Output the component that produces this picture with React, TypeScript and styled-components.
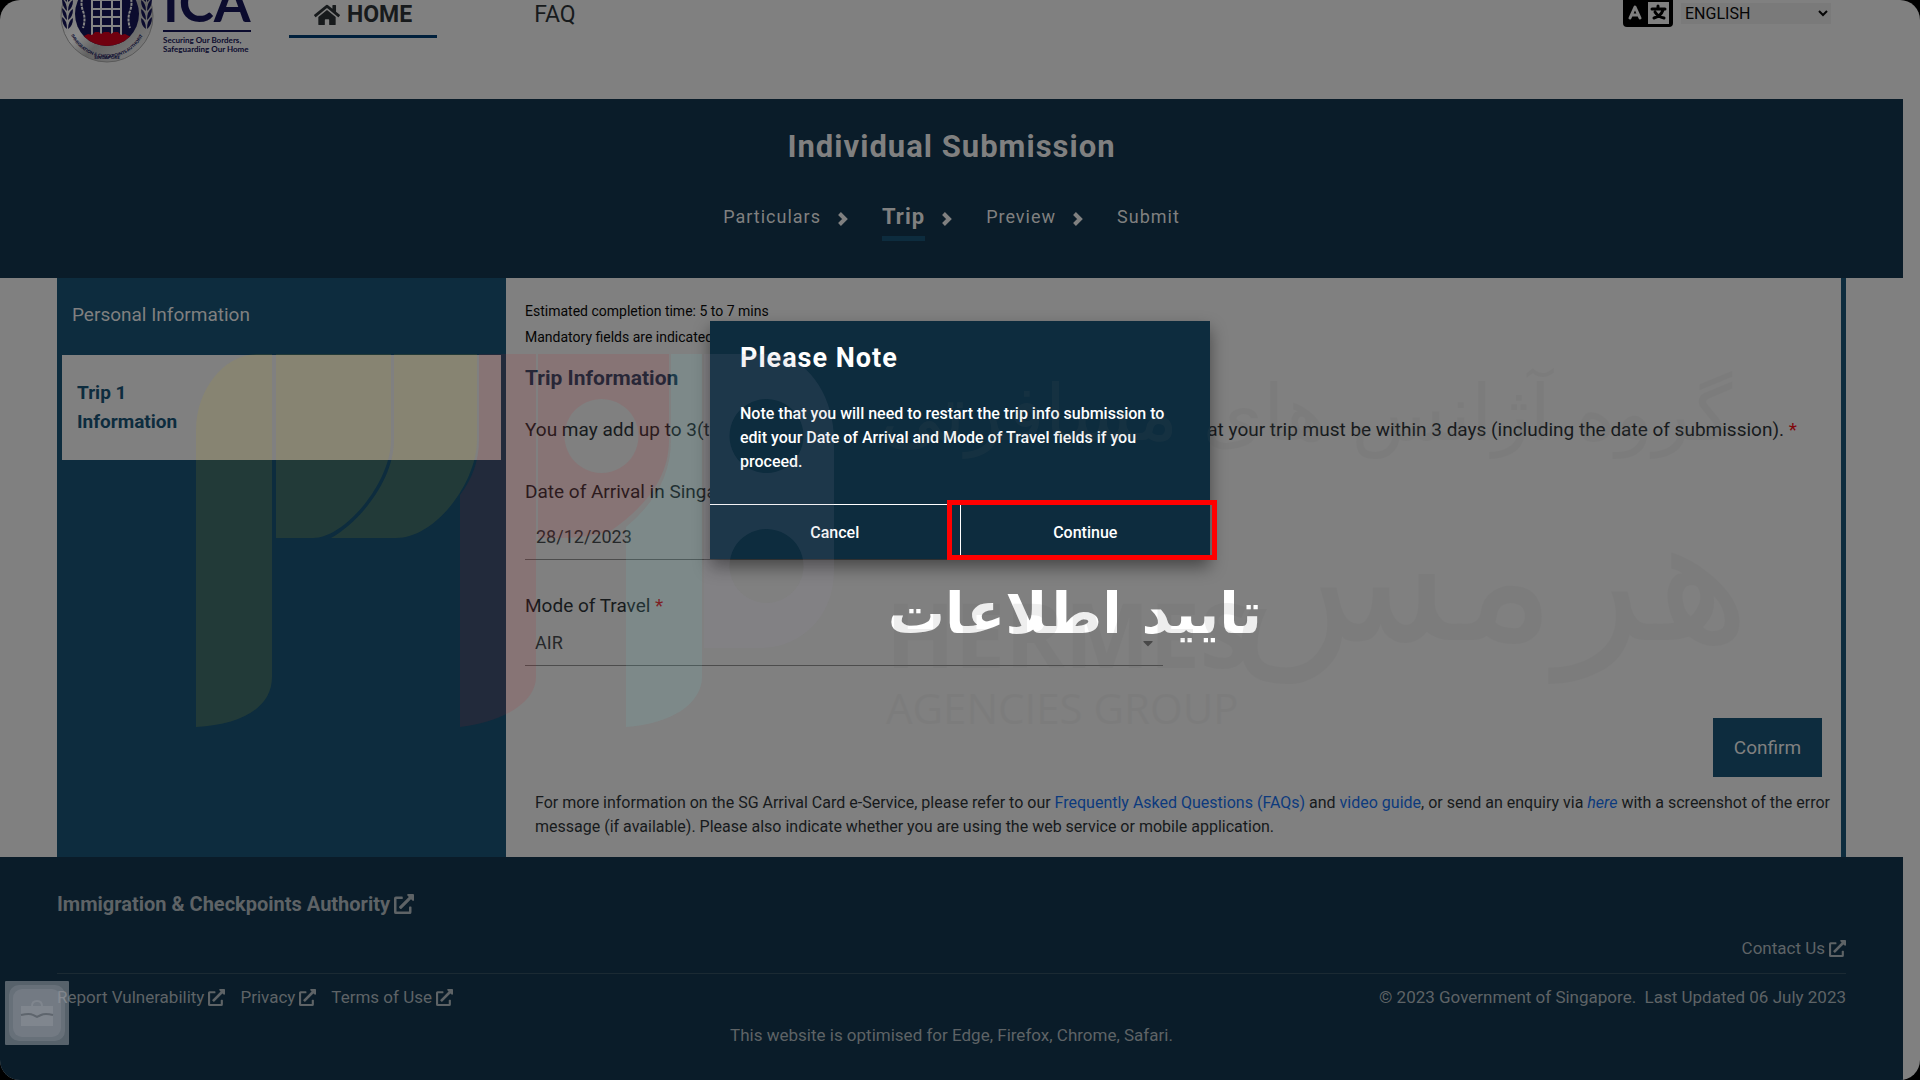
import React from 'react';
import styled, { createGlobalStyle } from 'styled-components';
import { FaHome, FaExternalLinkAlt, FaCaretDown } from 'react-icons/fa';

const c = {
  surface: '#808080',
  navy: '#0a1c29',
  teal: '#0d2c3e',
  ink: '#171a1c',
  muted: '#5e6366',
  link: '#0c3a7d',
};

const GlobalStyle = createGlobalStyle`
  * { box-sizing: border-box; }
  html, body { margin: 0; background: #000; }
  body { font-family: Roboto, "Liberation Sans", sans-serif; font-size: 16px; color: ${c.ink}; }
  h1, h2, h3, p { margin: 0; }
  button, select, input { font: inherit; color: inherit; }
  a { color: inherit; text-decoration: none; }
`;

const Screen = styled.div`
  position: relative;
  min-height: 100vh;
  padding-right: 17px;
  background: ${c.surface};
  border-radius: 20px;
  overflow: hidden;
  display: flex;
  flex-direction: column;
`;

const Header = styled.header`
  height: 99px;
  padding: 0 72px 0 60px;
  display: flex;
  align-items: flex-start;
  overflow: hidden;
`;

const Brand = styled.a`
  display: flex;
  gap: 9px;
  color: #0b0b2e;
  margin-top: -31px;
`;

const BrandText = styled.div`
  font-family: Lato, sans-serif;
  font-weight: 700;
  padding-top: 5px;
  width: 88px;
`;

const BrandName = styled.div`
  font-size: 53px;
  line-height: 56px;
  font-weight: 700;
  border-bottom: 2px solid #0b0b2e;
  white-space: nowrap;
`;

const BrandLine = styled.div`
  font-size: 8px;
  line-height: 9px;
  padding-top: 4px;
  white-space: nowrap;
`;

const Nav = styled.nav`
  display: flex;
  gap: 72px;
  margin-left: 38px;
`;

const NavLink = styled.a<{ $active?: boolean }>`
  display: flex;
  align-items: center;
  gap: 7px;
  height: 38px;
  padding: 0 25px 6px;
  font-size: 23px;
  font-weight: ${(p) => (p.$active ? 700 : 400)};
  border-bottom: 3px solid ${(p) => (p.$active ? '#00203c' : 'transparent')};
`;

const Language = styled.label`
  display: flex;
  gap: 8px;
  margin-left: auto;
`;

const LanguageSelect = styled.select`
  width: 150px;
  height: 21px;
  margin-top: 3px;
  padding: 0;
  border: 0;
  background: #7a7a7a;
  color: #050505;
`;

const Banner = styled.section`
  height: 179px;
  padding-top: 28px;
  background: ${c.navy};
  color: ${c.surface};
  display: flex;
  flex-direction: column;
  align-items: center;
  letter-spacing: 1px;
`;

const BannerTitle = styled.h1`
  font-size: 31px;
  line-height: 40px;
  font-weight: 700;
`;

const Steps = styled.ol`
  display: flex;
  list-style: none;
  margin: 28px 0 0;
  padding: 0;
  height: 48px;
`;

const Step = styled.li<{ $current?: boolean }>`
  display: flex;
  gap: 16px;
  margin-right: 34px;
  &:last-child { margin-right: 0; }
  span {
    height: 46px;
    line-height: 44px;
    font-size: ${(p) => (p.$current ? 22 : 18)}px;
    font-weight: ${(p) => (p.$current ? 700 : 400)};
    border-bottom: 5px solid ${(p) => (p.$current ? c.teal : 'transparent')};
  }
  svg { margin-top: 16px; }
`;

const Columns = styled.main`
  display: flex;
  margin: 0 57px;
  min-height: 579px;
  border-right: 5px solid ${c.teal};
`;

const Sidebar = styled.aside`
  width: 449px;
  flex: none;
  padding: 22px 5px;
  background: ${c.teal};
  color: ${c.surface};
  font-size: 19px;
`;

const SideHeading = styled.h2`
  padding: 0 10px;
  font-size: 19px;
  line-height: 30px;
  font-weight: 400;
`;

const SideCard = styled.a`
  display: block;
  margin-top: 25px;
  padding: 23px 15px;
  height: 105px;
  background: ${c.surface};
  color: ${c.teal};
  line-height: 29px;
  font-weight: 700;
`;

const Content = styled.section`
  flex: 1;
  min-width: 0;
  padding: 20px 5px 17px 19px;
  display: flex;
  flex-direction: column;
`;

const Small = styled.p`
  font-size: 14px;
  line-height: 26px;
  color: #050505;
`;

const SectionTitle = styled.h2`
  margin-top: 12px;
  font-size: 21px;
  line-height: 32px;
  font-weight: 700;
  color: #13283a;
`;

const Lead = styled.p`
  margin-top: 22px;
  font-size: 19px;
  line-height: 28px;
  white-space: nowrap;
`;

const Star = styled.span`
  color: #80080c;
`;

const Field = styled.div<{ $gap: number }>`
  width: 638px;
  margin-top: ${(p) => p.$gap}px;
  display: flex;
  flex-direction: column;
  border-bottom: 1px solid #4c4c4c;
  label { font-size: 19px; line-height: 28px; }
`;

const DateInput = styled.input`
  height: 43px;
  margin-top: 10px;
  padding: 0 11px 3px;
  border: 0;
  background: transparent;
  font-size: 18px;
  color: #26282a;
`;

const SelectWrap = styled.div`
  display: flex;
  align-items: center;
  padding-right: 7px;
  height: 45px;
`;

const ModeSelect = styled.select`
  flex: 1;
  height: 36px;
  padding: 0 10px;
  border: 0;
  appearance: none;
  background: transparent;
  font-size: 18px;
  color: #26282a;
`;

const Confirm = styled.button`
  align-self: flex-end;
  width: 109px;
  height: 59px;
  margin: 52px 14px 0 0;
  border: 0;
  background: ${c.teal};
  color: ${c.surface};
  font-size: 19px;
`;

const Info = styled.p`
  margin-top: 14px;
  padding: 0 0 0 10px;
  line-height: 24px;
  a { color: ${c.link}; }
`;

const Footer = styled.footer`
  flex: 1;
  padding: 33px 57px 0;
  background: ${c.navy};
  color: ${c.muted};
  font-size: 17px;
`;

const FootLink = styled.a<{ $strong?: boolean }>`
  display: inline-flex;
  align-items: center;
  gap: 4px;
  line-height: 28px;
  font-size: ${(p) => (p.$strong ? 20 : 17)}px;
  font-weight: ${(p) => (p.$strong ? 700 : 400)};
`;

const FootContact = styled.div`
  display: flex;
  justify-content: flex-end;
  padding: 16px 0 11px;
  border-bottom: 1px solid #1b2a33;
`;

const FootRow = styled.div`
  display: flex;
  justify-content: space-between;
  align-items: center;
  padding-top: 9px;
  > span { white-space: pre; }
`;

const FootLinks = styled.div`
  display: flex;
  gap: 15px;
`;

const FootNote = styled.p`
  margin-top: 13px;
  line-height: 22px;
  font-size: 17px;
  text-align: center;
`;

const Dialog = styled.div`
  position: absolute;
  top: 321px;
  left: 50%;
  width: 500px;
  margin-left: -250px;
  background: ${c.teal};
  color: #fff;
  box-shadow: 0 8px 16px rgba(0, 0, 0, 0.45);
`;

const DialogBody = styled.div`
  padding: 19px 30px 30px;
  border-bottom: 1px solid #fff;
  h2 { font-size: 27px; line-height: 36px; font-weight: 700; letter-spacing: 1px; }
  p { margin-top: 26px; line-height: 24px; font-weight: 500; }
`;

const DialogActions = styled.div`
  display: flex;
`;

const DialogButton = styled.button`
  flex: 1;
  height: 54px;
  border: 0;
  background: transparent;
  font-weight: 500;
  & + & { border-left: 1px solid #fff; }
`;

const Highlight = styled.div`
  position: absolute;
  right: -7px;
  bottom: -1px;
  width: 270px;
  height: 60px;
  border: 5px solid #ff0000;
  pointer-events: none;
`;

const Caption = styled.p`
  position: absolute;
  top: 568px;
  left: 50%;
  margin-left: -70px;
  width: 372px;
  text-align: center;
  white-space: nowrap;
  color: #fff;
  font: 700 57px/90px "DejaVu Sans", sans-serif;
`;

const Watermark = styled.svg`
  position: absolute;
  top: 340px;
  left: 50%;
  margin-left: -780px;
  pointer-events: none;
`;

const Toolbox = styled.button`
  position: absolute;
  left: 5px;
  bottom: 35px;
  width: 64px;
  height: 64px;
  padding: 0;
  border: 0;
  background: transparent;
  svg { display: block; }
`;

const Chevron = () => (
  <svg width="11" height="16" viewBox="0 0 11 16" aria-hidden="true">
    <path d="M2.500 2.500L8 8L2.500 13.500" fill="none" stroke="currentColor" strokeWidth="4" />
  </svg>
);

const laurels = [0, 1, 2, 3];

const Seal = () => (
  <svg width="94" height="94" viewBox="0 0 94 94" aria-hidden="true">
    <defs>
      <linearGradient id="silver" x1="0" y1="0" x2="1" y2="1">
        <stop offset="0" stopColor="#6b6b6b" />
        <stop offset=".45" stopColor="#8a8a8a" />
        <stop offset=".6" stopColor="#626262" />
        <stop offset="1" stopColor="#858585" />
      </linearGradient>
      <clipPath id="shield"><circle cx="47" cy="45" r="32" /></clipPath>
      <path id="ringText" d="M11 66 A40 40 0 0 0 83 66" />
    </defs>
    <circle cx="47" cy="47" r="46" fill="url(#silver)" stroke="#595959" />
    <g clipPath="url(#shield)">
      <rect width="94" height="94" fill="#0b0b2e" />
      <g stroke="#858585" strokeWidth="2" fill="none">
        <path d="M32 20V66M41 20V66M52 20V66M61 20V66M32 31H61M32 40H61M32 48H61M32 57H61" />
      </g>
      <g stroke="#858585" strokeWidth="2" strokeDasharray="3 1" fill="none">
        <path d="M23 26q-3 8 0 16t0 17M70 26q3 8 0 16t0 17" />
      </g>
      <path d="M10 94V68l9-2 5 1 4-2 4 1 3-3h4l2 2 3-2h5l2 2 3-2h4l3 3 4-1 4 2 15 0v27z" fill="#70000f" />
    </g>
    {laurels.map((i) => (
      <g key={i} fill="#0b0b2e" transform={`translate(0 ${-i * 9})`}>
        <path d="M2 48q5 3 5 12q-5-4-5-12zM13 49q-5 3-5 11q5-3 5-11z" />
        <path d="M92 48q-5 3-5 12q5-4 5-12zM81 49q5 3 5 11q-5-3-5-11z" />
      </g>
    ))}
    <text fontSize="4.300" fontFamily="Lato, sans-serif" fontWeight="900" fill="#0b0b2e">
      <textPath href="#ringText">IMMIGRATION &amp; CHECKPOINTS AUTHORITY</textPath>
    </text>
    <text x="47" y="90" textAnchor="middle" fontSize="4.500" fontFamily="Lato, sans-serif" fontWeight="900" fill="#0b0b2e">SINGAPORE</text>
  </svg>
);

const LanguageIcon = () => (
  <svg width="50" height="27" viewBox="0 0 50 27" aria-hidden="true">
    <path d="M0 0H50V23a4 4 0 0 1-4 4H4a4 4 0 0 1-4-4z" fill="#000" />
    <rect x="25" y="2" width="21" height="22" fill="#808080" />
    <path d="M7 18l5-11 5 11M9 15h6" fill="none" stroke="#808080" strokeWidth="3" strokeLinecap="round" strokeLinejoin="round" />
    <path d="M29 9h13M35 6v3M40 10q-2 6-9 8M32 12q3 5 9 6" fill="none" stroke="#000" strokeWidth="3" strokeLinecap="round" />
  </svg>
);

const steps = ['Particulars', 'Trip', 'Preview', 'Submit'];

export default function App() {
  return (
    <>
      <GlobalStyle />
      <Screen>
        <Header>
          <Brand href="#" aria-label="ICA home">
            <Seal />
            <BrandText>
              <BrandName>ICA</BrandName>
              <BrandLine>Securing Our Borders,<br />Safeguarding Our Home</BrandLine>
            </BrandText>
          </Brand>
          <Nav>
            <NavLink href="#" $active><FaHome size={26} />HOME</NavLink>
            <NavLink href="#">FAQ</NavLink>
          </Nav>
          <Language>
            <LanguageIcon />
            <LanguageSelect aria-label="Language"><option>ENGLISH</option></LanguageSelect>
          </Language>
        </Header>

        <Banner>
          <BannerTitle>Individual Submission</BannerTitle>
          <Steps>
            {steps.map((s, i) => (
              <Step key={s} $current={s === 'Trip'}>
                <span>{s}</span>
                {i < steps.length - 1 && <Chevron />}
              </Step>
            ))}
          </Steps>
        </Banner>

        <Columns>
          <Sidebar>
            <SideHeading>Personal Information</SideHeading>
            <SideCard href="#">Trip 1<br />Information</SideCard>
          </Sidebar>
          <Content>
            <Small>Estimated completion time: 5 to 7 mins</Small>
            <Small>Mandatory fields are indicated with *</Small>
            <SectionTitle>Trip Information</SectionTitle>
            <Lead>
              You may add up to 3(three) trips within the same submission. Please also note that your trip must be within 3 days (including the date of submission). <Star>*</Star>
            </Lead>
            <Field $gap={34}>
              <label htmlFor="arrival">Date of Arrival in Singapore <Star>*</Star></label>
              <DateInput id="arrival" defaultValue="28/12/2023" />
            </Field>
            <Field $gap={32}>
              <label htmlFor="mode">Mode of Travel <Star>*</Star></label>
              <SelectWrap>
                <ModeSelect id="mode"><option>AIR</option></ModeSelect>
                <FaCaretDown size={16} color="#484848" />
              </SelectWrap>
            </Field>
            <Confirm type="button">Confirm</Confirm>
            <Info>
              For more information on the SG Arrival Card e-Service, please refer to our <a href="#">Frequently Asked Questions (FAQs)</a> and <a href="#">video guide</a>, or send an enquiry via <a href="#"><i>here</i></a> with a screenshot of the error message (if available). Please also indicate whether you are using the web service or mobile application.
            </Info>
          </Content>
        </Columns>

        <Footer>
          <FootLink href="#" $strong>Immigration &amp; Checkpoints Authority <FaExternalLinkAlt size={20} /></FootLink>
          <FootContact><FootLink href="#">Contact Us <FaExternalLinkAlt size={17} /></FootLink></FootContact>
          <FootRow>
            <FootLinks>
              <FootLink href="#">Report Vulnerability <FaExternalLinkAlt size={17} /></FootLink>
              <FootLink href="#">Privacy <FaExternalLinkAlt size={17} /></FootLink>
              <FootLink href="#">Terms of Use <FaExternalLinkAlt size={17} /></FootLink>
            </FootLinks>
            <span>{'© 2023 Government of Singapore.  Last Updated 06 July 2023'}</span>
          </FootRow>
          <FootNote>This website is optimised for Edge, Firefox, Chrome, Safari.</FootNote>
        </Footer>

        <Dialog role="dialog" aria-labelledby="note-title">
          <DialogBody>
            <h2 id="note-title">Please Note</h2>
            <p>Note that you will need to restart the trip info submission to edit your Date of Arrival and Mode of Travel fields if you proceed.</p>
          </DialogBody>
          <DialogActions>
            <DialogButton type="button">Cancel</DialogButton>
            <DialogButton type="button">Continue</DialogButton>
          </DialogActions>
          <Highlight />
        </Dialog>

        <Caption lang="fa" dir="rtl">تایید اطلاعات</Caption>

        <Watermark width="1560" height="400" viewBox="180 340 1560 400" aria-hidden="true">
          <g fill="rgb(187,161,20)" fillOpacity=".12">
            <path d="M196 430C196 390 224 354 258 354H272V677C272 707 242 725 196 727Z" />
            <path d="M276 354H391V440C391 482 345 538 313 538H276Z" />
            <path d="M394 354H477V440C477 482 436 538 396 538H331C360 522 394 480 394 440Z" />
          </g>
          <g fill="rgb(190,30,40)" fillOpacity=".12">
            <path d="M479 354H536V677C536 703 502 722 460 727V495Q479 470 479 440Z" />
            <path fillRule="evenodd" d="M538 354H669V440C669 482 640 510 612 530Q590 538 560 538H538ZM601 399a37 37 0 1 0 1 0Z" />
          </g>
          <path d="M671 354H702V677C702 703 672 724 626 727V527Q671 490 671 440Z" fill="rgb(110,205,205)" fillOpacity=".12" />
          <g fill="rgb(146,137,163)" fillOpacity=".12" fillRule="evenodd">
            <path d="M704 354H778C812 362 834 400 834 440V529H704ZM766 399a37 37 0 1 0 1 0Z" />
            <path d="M704 529H834V570C834 618 800 648 760 648H704ZM766 529a37 37 0 1 0 1 0Z" />
          </g>
          <g fill="#606060" opacity=".1">
            <text x="1306" y="440" textAnchor="middle" direction="rtl" fontSize="77" fontFamily="DejaVu Sans, sans-serif">گروه آژانس های مسافرتی</text>
            <text x="1490" y="640" textAnchor="middle" direction="rtl" fontSize="180" fontFamily="DejaVu Sans, sans-serif">هرمس</text>
            <text x="886" y="668" fontSize="90" fontWeight="700" fontFamily="Open Sans, sans-serif">HERMES</text>
            <text x="886" y="724" fontSize="42" fontFamily="Open Sans, sans-serif">AGENCIES GROUP</text>
          </g>
        </Watermark>

        <Toolbox type="button" aria-label="Toolbox">
          <svg width="64" height="64" viewBox="0 0 64 64">
            <rect width="64" height="64" rx="1" fill="#a4a8ae" fillOpacity=".5" />
            <rect x="4" y="4" width="56" height="56" rx="10" fill="#8e939d" fillOpacity=".3" />
            <rect x="8" y="8" width="48" height="48" rx="9" fill="#8e939d" fillOpacity=".3" />
            <path d="M16 25H48V45H16z" fill="#80868e" />
            <path d="M27 25q0-5 5-5t5 5" fill="none" stroke="#80868e" strokeWidth="2" />
            <path d="M16 34q9-2 12 0l4 2 4-2q4-2 12 0" fill="none" stroke="#5e656d" strokeWidth="2" />
          </svg>
        </Toolbox>
      </Screen>
    </>
  );
}
